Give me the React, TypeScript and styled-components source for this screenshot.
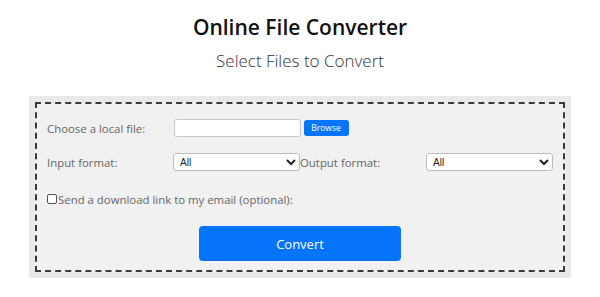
import { FC } from 'react'
import styled, { createGlobalStyle } from 'styled-components'

const GlobalStyle = createGlobalStyle`
  body {
    margin: 0;
    background: #fff;
    font-family: 'Open Sans', 'Liberation Sans', sans-serif;
  }
`

const Page = styled.div`
  display: flex;
  flex-direction: column;
  align-items: center;
`

const Title = styled.h1`
  margin: 0;
  padding-top: 12px;
  font-size: 21px;
  line-height: 30px;
  font-weight: 600;
  color: #111;
`

const Subtitle = styled.h2`
  margin: 7px 0 0;
  font-size: 17px;
  line-height: 24px;
  font-weight: 300;
  color: #333;
`

const Panel = styled.div`
  box-sizing: border-box;
  width: 542px;
  margin-top: 23px;
  padding: 6px;
  background: #e9e9e9;
`

const DashedBox = styled.form`
  border: 2px dashed #3a3a3a;
  background: #f1f1f1;
  padding: 7px 10px 9px;
  display: flex;
  flex-direction: column;
`

const Row = styled.div<{ $gap?: number }>`
  display: grid;
  grid-template-columns: repeat(4, 1fr);
  align-items: center;
  height: 34px;
  margin-top: ${p => p.$gap ?? 0}px;
`

const Label = styled.label`
  font-size: 11.4px;
  color: #666;
  white-space: nowrap;
`

const FileGroup = styled.div`
  grid-column: 2 / span 3;
  display: flex;
  align-items: center;
  gap: 3px;
`

const TextInput = styled.input`
  box-sizing: border-box;
  width: 127px;
  height: 18px;
  margin: 0;
  border: 1px solid #c8c8c8;
  border-radius: 3px;
  background: #fff;
`

const SmallButton = styled.button`
  box-sizing: border-box;
  height: 16px;
  width: 45px;
  padding: 0;
  border: none;
  border-radius: 3px;
  background: #0674fb;
  color: #fff;
  font-family: 'Open Sans', sans-serif;
  font-size: 8.5px;
  font-weight: 500;
  line-height: 16px;
`

const Select = styled.select`
  box-sizing: border-box;
  width: 127px;
  height: 18px;
  margin: 0;
  padding: 0 2px;
  border: 1px solid #bdbdbd;
  border-radius: 3px;
  background: #fff;
  font-family: 'Liberation Sans', Arial, sans-serif;
  font-size: 10px;
  color: #222;
`

const CheckLabel = styled.label`
  grid-column: 1 / span 4;
  display: flex;
  align-items: center;
  font-size: 11.4px;
  color: #666;
`

const Checkbox = styled.input`
  appearance: none;
  box-sizing: border-box;
  width: 10px;
  height: 10px;
  margin: 0 1px 0 0;
  border: 1px solid #555;
  border-radius: 2px;
  background: #fff;
`

const ConvertButton = styled.button`
  align-self: center;
  width: 202px;
  height: 35px;
  margin-top: 10px;
  border: none;
  border-radius: 4px;
  background: #0674fb;
  color: #fff;
  font-family: 'Open Sans', sans-serif;
  font-size: 13px;
`

const App: FC = () => (
  <Page>
    <GlobalStyle />
    <Title>Online File Converter</Title>
    <Subtitle>Select Files to Convert</Subtitle>
    <Panel>
      <DashedBox onSubmit={e => e.preventDefault()}>
        <Row>
          <Label>Choose a local file:</Label>
          <FileGroup>
            <TextInput type="text" />
            <SmallButton type="button">Browse</SmallButton>
          </FileGroup>
        </Row>
        <Row>
          <Label>Input format:</Label>
          <Select defaultValue="all">
            <option value="all">All</option>
          </Select>
          <Label>Output format:</Label>
          <Select defaultValue="all">
            <option value="all">All</option>
          </Select>
        </Row>
        <Row $gap={3}>
          <CheckLabel>
            <Checkbox type="checkbox" />
            Send a download link to my email (optional):
          </CheckLabel>
        </Row>
        <ConvertButton type="submit">Convert</ConvertButton>
      </DashedBox>
    </Panel>
  </Page>
)

export default App
